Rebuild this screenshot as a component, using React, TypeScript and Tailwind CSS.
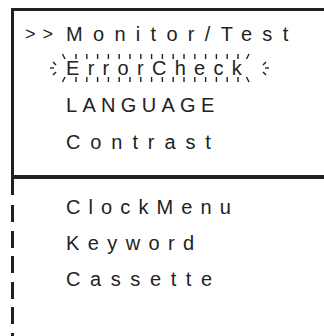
import React from "react";

const ink = "#231f20";

const Row: React.FC<{
  label: string;
  marker?: string;
  className?: string;
  children?: React.ReactNode;
}> = ({ label, marker, className = "", children }) => {
  return (
    <div className={`relative flex items-center pl-[11px] ${className}`}>
      <span className="w-[41px] shrink-0 tracking-[7px] text-[18px] leading-none">
        {marker}
      </span>
      {children}
      <span className="leading-none">{label}</span>
    </div>
  );
};

const BlinkMarks: React.FC = () => {
  const ticks = Array.from({ length: 16 }, (_, i) => 28 + i * 10.8);
  return (
    <svg
      className="absolute left-[34px] top-0"
      width="230"
      height="32"
      viewBox="0 0 230 32"
      fill="none"
      stroke={ink}
      strokeWidth="1.4"
      strokeLinecap="butt"
    >
      {ticks.map((x) => (
        <g key={x}>
          <line x1={x} y1="2" x2={x} y2="7" />
          <line x1={x} y1="25" x2={x} y2="30" />
        </g>
      ))}
      <line x1="14.5" y1="2" x2="17" y2="7" />
      <line x1="17" y1="25" x2="14.5" y2="30" />
      <line x1="201" y1="2" x2="198.5" y2="7" />
      <line x1="198.5" y1="25" x2="201" y2="30" />
      <line x1="5" y1="10" x2="8" y2="13" />
      <line x1="2" y1="16" x2="6" y2="16" />
      <line x1="8" y1="20" x2="5" y2="23" />
      <line x1="215" y1="13" x2="218" y2="10" />
      <line x1="217" y1="16" x2="221" y2="16" />
      <line x1="215" y1="20" x2="218" y2="23" />
    </svg>
  );
};

export default function App() {
  return (
    <div
      className="w-[324px] h-[336px] overflow-hidden bg-white pt-[8px] pl-[11px] text-[20px] text-[#222]"
      style={{ fontFamily: '"Liberation Sans", Arial, sans-serif' }}
    >
      <div className="border-l-[3px] border-t-[3px] border-b-[4px] border-[#231f20] pt-[5px] pb-[17px]">
        <Row label="Monitor/Test" marker=">>" className="h-[36px] tracking-[10.3px]" />
        <Row label="ErrorCheck" className="h-[32px] tracking-[8.3px]">
          <BlinkMarks />
        </Row>
        <Row label="LANGUAGE" className="h-[42px] tracking-[5.3px]" />
        <Row label="Contrast" className="h-[32px] tracking-[9.9px]" />
      </div>
      <div className="flex">
        <div className="flex w-[3px] shrink-0 flex-col">
          <div className="h-[16px] bg-[#231f20]" />
          <div className="mt-[10px] flex flex-col gap-[8.5px]">
            <div className="h-[17px] bg-[#231f20]" />
            <div className="h-[17px] bg-[#231f20]" />
            <div className="h-[17px] bg-[#231f20]" />
            <div className="h-[17px] bg-[#231f20]" />
            <div className="h-[17px] bg-[#231f20]" />
            <div className="h-[17px] bg-[#231f20]" />
          </div>
        </div>
        <div className="flex-1 pt-[10px]">
          <Row label="ClockMenu" className="h-[36px] tracking-[8.1px]" />
          <Row label="Keyword" className="h-[36px] tracking-[8.4px]" />
          <Row label="Cassette" className="h-[36px] tracking-[9.6px]" />
        </div>
      </div>
    </div>
  );
}
